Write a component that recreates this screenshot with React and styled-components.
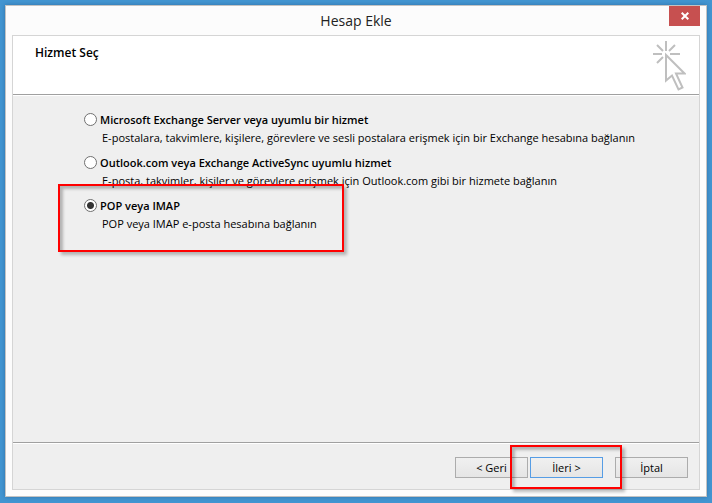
import { useState } from "react";
import styled, { createGlobalStyle, css } from "styled-components";

const GlobalStyle = createGlobalStyle`
  * {
    box-sizing: border-box;
  }

  body {
    margin: 0;
    background: #4295d1;
    font-family: "Open Sans", "Noto Sans", sans-serif;
    font-size: 11px;
    color: #000;
  }
`;

const Desktop = styled.div`
  display: flex;
  min-height: 100vh;
  padding: 5px 5px 6px;
  background: #4295d1;
`;

const Dialog = styled.div`
  flex: 1;
  display: flex;
  flex-direction: column;
  padding: 0 6px 6px;
  border: 1px solid #c3c3c3;
  background: #fcfcfc;
  box-shadow: 0 0 4px rgba(0, 40, 80, 0.3);
`;

const TitleBar = styled.header`
  display: grid;
  grid-template-columns: 1fr auto 1fr;
  align-items: start;
  height: 29px;
`;

const Title = styled.h1`
  grid-column: 2;
  margin: 0;
  font-size: 14px;
  font-weight: 400;
  line-height: 29px;
  color: #222;
`;

const CloseButton = styled.button`
  display: flex;
  align-items: center;
  justify-content: center;
  justify-self: end;
  width: 31px;
  height: 20px;
  padding: 0;
  border: 0;
  background: #c75050;
`;

const Panel = styled.form`
  flex: 1;
  display: flex;
  flex-direction: column;
  border: 1px solid #d5d5d5;
  background: #efefef;
`;

const PanelHeader = styled.div`
  display: flex;
  justify-content: space-between;
  align-items: flex-start;
  height: 58px;
  padding: 5px 13px 0 22px;
  background: #fff;
`;

const Heading = styled.h2`
  margin: 0;
  padding-top: 3px;
  font-size: 12px;
  font-weight: 600;
  line-height: 18px;
`;

const Divider = styled.hr`
  width: 100%;
  height: 2px;
  margin: 0;
  border: 0;
  border-top: 1px solid #a0a0a0;
  background: #fff;
`;

const Options = styled.div`
  flex: 1;
  display: flex;
  flex-direction: column;
  align-items: flex-start;
  gap: 7px;
  padding: 15px 20px 15px 71px;
`;

const StyledOption = styled.label`
  position: relative;
  display: grid;
  grid-template-columns: 13px auto;
  column-gap: 3px;
  align-items: start;
  line-height: 18px;
`;

const Radio = styled.input`
  appearance: none;
  width: 13px;
  height: 13px;
  margin: 2px 0 0;
  border: 1px solid #707070;
  border-radius: 50%;
  background: #fff;

  &:checked {
    background: radial-gradient(circle, #333 3px, #fff 4px);
  }
`;

const OptionName = styled.span`
  font-weight: 600;
`;

const OptionText = styled.span`
  grid-column: 2;
  padding-left: 2px;
`;

const Footer = styled.div`
  display: flex;
  justify-content: flex-end;
  gap: 12px;
  padding: 13px 11px 11px;
`;

const StepButtons = styled.div`
  display: flex;
  gap: 2px;
`;

const ButtonSlot = styled.div`
  position: relative;
`;

const Button = styled.button`
  display: block;
  width: 73px;
  height: 21px;
  padding: 0;
  border: 1px solid ${(props) => (props.$primary ? "#569de5" : "#acacac")};
  background: linear-gradient(#f0f0f0, #e5e5e5);
  font-family: inherit;
  font-size: 11px;
  line-height: 18px;
  color: #000;
`;

const Highlight = styled.span`
  position: absolute;
  border: 2px solid #f00;
  box-shadow:
    3px 3px 3px rgba(0, 0, 0, 0.25),
    inset 3px 3px 3px rgba(0, 0, 0, 0.25);
  pointer-events: none;

  ${(props) =>
    props.$area === "option" &&
    css`
      top: -13px;
      left: -26px;
      width: 286px;
      height: 68px;
    `}

  ${(props) =>
    props.$area === "button" &&
    css`
      top: -12px;
      left: -20px;
      width: 112px;
      height: 44px;
    `}
`;

function ClickIcon() {
  return (
    <svg width="34" height="50" viewBox="0 0 34 50" aria-hidden="true">
      <g fill="none" stroke="#bfbfbf" strokeWidth="2">
        <path d="M14 0v10M1 13h9M18 13h10M5 4l6 6M23 4l-6 6M5 22l6-6" />
        <path d="M14 14v25.500l6-5 6.500 14 4-2-6.500-14h8.500z" />
      </g>
    </svg>
  );
}

const services = [
  {
    id: "exchange",
    name: "Microsoft Exchange Server veya uyumlu bir hizmet",
    text: "E-postalara, takvimlere, kişilere, görevlere ve sesli postalara erişmek için bir Exchange hesabına bağlanın",
  },
  {
    id: "activesync",
    name: "Outlook.com veya Exchange ActiveSync uyumlu hizmet",
    text: "E-posta, takvimler, kişiler ve görevlere erişmek için Outlook.com gibi bir hizmete bağlanın",
  },
  {
    id: "pop",
    name: "POP veya IMAP",
    text: "POP veya IMAP e-posta hesabına bağlanın",
    highlighted: true,
  },
];

function Option({ service, checked, onSelect }) {
  return (
    <StyledOption>
      <Radio
        type="radio"
        name="service"
        value={service.id}
        checked={checked}
        onChange={() => onSelect(service.id)}
      />
      <OptionName>{service.name}</OptionName>
      <OptionText>{service.text}</OptionText>
      {service.highlighted && <Highlight $area="option" />}
    </StyledOption>
  );
}

export default function App() {
  const [selected, setSelected] = useState("pop");

  return (
    <>
      <GlobalStyle />
      <Desktop>
        <Dialog role="dialog" aria-labelledby="dialog-title">
          <TitleBar>
            <Title id="dialog-title">Hesap Ekle</Title>
            <CloseButton type="button" aria-label="Kapat">
              <svg width="8" height="8" viewBox="0 0 8 8">
                <path d="M.7.7l6.600 6.600M7.300.7L.7 7.300" stroke="#fff" strokeWidth="2" />
              </svg>
            </CloseButton>
          </TitleBar>
          <Panel>
            <PanelHeader>
              <Heading>Hizmet Seç</Heading>
              <ClickIcon />
            </PanelHeader>
            <Divider />
            <Options role="radiogroup" aria-label="Hizmet Seç">
              {services.map((service) => (
                <Option
                  key={service.id}
                  service={service}
                  checked={selected === service.id}
                  onSelect={setSelected}
                />
              ))}
            </Options>
            <Divider />
            <Footer>
              <StepButtons>
                <Button type="button">&lt; Geri</Button>
                <ButtonSlot>
                  <Button type="button" $primary>
                    İleri &gt;
                  </Button>
                  <Highlight $area="button" />
                </ButtonSlot>
              </StepButtons>
              <Button type="button">İptal</Button>
            </Footer>
          </Panel>
        </Dialog>
      </Desktop>
    </>
  );
}
